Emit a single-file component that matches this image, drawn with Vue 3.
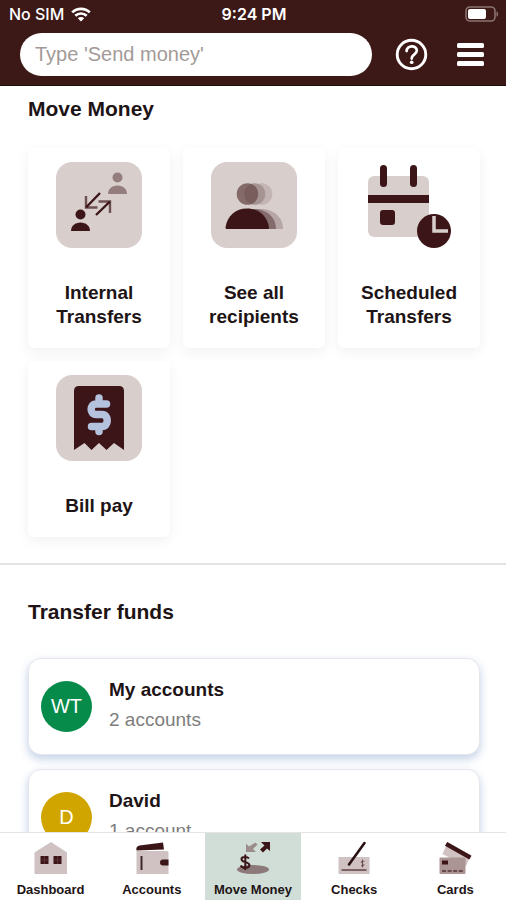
<script setup>
const actions = [
  { id: 'internal', lines: ['Internal', 'Transfers'] },
  { id: 'recipients', lines: ['See all', 'recipients'] },
  { id: 'scheduled', lines: ['Scheduled', 'Transfers'] },
  { id: 'bill', lines: ['Bill pay'] },
]

const payees = [
  { initials: 'WT', name: 'My accounts', detail: '2 accounts', tone: 'green' },
  { initials: 'D', name: 'David', detail: '1 account', tone: 'gold' },
]

const tabs = [
  { id: 'dashboard', label: 'Dashboard' },
  { id: 'accounts', label: 'Accounts' },
  { id: 'move', label: 'Move Money' },
  { id: 'checks', label: 'Checks' },
  { id: 'cards', label: 'Cards' },
]
const activeTab = 'move'
</script>

<template>
  <div class="app">
    <header class="header">
      <div class="status">
        <span class="carrier">
          No SIM
          <svg class="wifi" viewBox="0 0 20 15" aria-hidden="true">
            <g fill="none" stroke="#fff" stroke-width="2.7">
              <path d="M1.2 5.4a12.6 12.6 0 0 1 17.6 0" />
              <path d="M4.3 8.8a8.2 8.2 0 0 1 11.4 0" />
            </g>
            <path d="M10 14.6l-3.2-3.3a4.6 4.6 0 0 1 6.4 0z" fill="#fff" />
          </svg>
        </span>
        <span class="clock">9:24 PM</span>
        <svg class="battery" viewBox="0 0 34 16" aria-hidden="true">
          <rect x="1" y="1" width="29" height="14" rx="4" fill="none" stroke="#8b7472" stroke-width="1.6" />
          <rect x="3" y="3" width="18" height="10" rx="2" fill="#fff" />
          <path d="M31.5 5.2c2.2 1 2.2 4.6 0 5.6z" fill="#8b7472" />
        </svg>
      </div>
      <div class="toolbar">
        <input class="search" type="text" placeholder="Type 'Send money'" aria-label="Search" />
        <button class="icon-button" type="button" aria-label="Help">
          <svg class="help" viewBox="0 0 34 34" fill="none" stroke="#fff">
            <circle cx="17" cy="17" r="14.7" stroke-width="3" />
            <path d="M12 13.5c0-6.5 10.5-6.5 10.5-.5 0 4-5.3 3.800-5.3 8.2" stroke-width="2.8" stroke-linecap="round" />
            <circle cx="17.2" cy="25" r="1.9" fill="#fff" stroke="none" />
          </svg>
        </button>
        <button class="icon-button" type="button" aria-label="Menu">
          <svg class="burger" viewBox="0 0 27 23" fill="#fff">
            <rect y="0" width="27" height="5" rx="1.5" />
            <rect y="9" width="27" height="5" rx="1.5" />
            <rect y="18" width="27" height="5" rx="1.5" />
          </svg>
        </button>
      </div>
    </header>

    <main class="content">
      <section class="move">
        <h1 class="heading">Move Money</h1>
        <div class="grid">
          <button v-for="action in actions" :key="action.id" class="tile" type="button">
            <svg v-if="action.id === 'internal'" class="tile-icon" viewBox="0 0 86 86" aria-hidden="true">
              <rect width="86" height="86" rx="16" fill="#d8cfcd" />
              <g fill="#937d7d">
                <circle cx="61.5" cy="15.5" r="5" />
                <path d="M52 32c0-5 4-8.5 9.5-8.5S71 27 71 32z" />
              </g>
              <g fill="#3c1518">
                <circle cx="24.5" cy="52.5" r="5" />
                <path d="M15 69c0-5 4-8.5 9.5-8.5S34 64 34 69z" />
              </g>
              <g fill="none" stroke-width="2.4">
                <path d="M30 34v11.5H41.500M42.500 39.500H54v11.500" stroke="#6e5050" />
                <path d="M44 31L30 45.500M40 53l14-13.500" stroke="#3c1518" />
              </g>
            </svg>

            <svg v-else-if="action.id === 'recipients'" class="tile-icon" viewBox="0 0 86 86" aria-hidden="true">
              <rect width="86" height="86" rx="16" fill="#d8cfcd" />
              <circle cx="50.500" cy="32" r="10.800" fill="#c3b5b4" />
              <circle cx="43.500" cy="32" r="10.800" fill="#a69493" />
              <circle cx="36.500" cy="32" r="10.800" fill="#846b6a" />
              <path d="M40 22a10.800 10.800 0 0 1 0 20 10.800 10.800 0 0 1 0-20z" fill="#6f5353" opacity=".6" />
              <path d="M28 67c0-12 9.500-20 22-20s22 8 22 20z" fill="#b6a7a6" />
              <path d="M21 67c0-12 9.500-20 22-20s22 8 22 20z" fill="#856c6c" />
              <path d="M14.500 65.500C16 54 24.500 46.500 36 46.500S56.500 54 58 65.500c0 1-.5 1.500-1.500 1.500H16c-1 0-1.500-.5-1.500-1.500z" fill="#3c1518" />
            </svg>

            <svg v-else-if="action.id === 'scheduled'" class="tile-icon" viewBox="0 0 86 86" aria-hidden="true">
              <rect x="2" y="14" width="61" height="61" rx="6" fill="#d8cfcd" />
              <rect x="2" y="33" width="61" height="8" fill="#3c1518" />
              <rect x="14" y="3" width="7" height="22" rx="3.5" fill="#3c1518" />
              <rect x="44" y="3" width="7" height="22" rx="3.5" fill="#3c1518" />
              <rect x="14" y="48" width="15" height="15" rx="3" fill="#3c1518" />
              <circle cx="68" cy="69" r="17" fill="#3c1518" />
              <path d="M68 54v15h14" fill="none" stroke="#d8cfcd" stroke-width="3.5" />
            </svg>

            <svg v-else class="tile-icon" viewBox="0 0 86 86" aria-hidden="true">
              <rect width="86" height="86" rx="16" fill="#d8cfcd" />
              <path d="M18 75V16q0-5 5-5h40q5 0 5 5v59l-10-7-7.500 7-7.500-7-7.500 7-7-7z" fill="#3c1518" />
              <path d="M50.500 29H40c-6.500 0-6.500 10.500 0 10.500h6c7 0 7 12 0 12H35.500M43 23v6M43 51.500v5" fill="none" stroke="#b4c2dd" stroke-width="7.500" stroke-linecap="round" stroke-linejoin="round" />
            </svg>

            <span class="tile-label">
              <span v-for="line in action.lines" :key="line" class="tile-line">{{ line }}</span>
            </span>
          </button>
        </div>
      </section>

      <section class="transfer">
        <h2 class="heading">Transfer funds</h2>
        <div class="payees">
          <button v-for="payee in payees" :key="payee.name" class="payee" type="button">
            <span class="avatar" :class="payee.tone">{{ payee.initials }}</span>
            <span class="payee-text">
              <span class="payee-name">{{ payee.name }}</span>
              <span class="payee-detail">{{ payee.detail }}</span>
            </span>
          </button>
        </div>
      </section>
    </main>

    <nav class="tabs" aria-label="Main">
      <a v-for="tab in tabs" :key="tab.id" class="tab" :class="{ active: tab.id === activeTab }" href="#">
        <svg v-if="tab.id === 'dashboard'" class="tab-icon" viewBox="0 0 36 34" aria-hidden="true">
          <path d="M1.5 33V11.500L18 1l16 10.500V33z" fill="#d0c2c2" />
          <path d="M7.500 15h8v8h-8zM20.500 15h8v8h-8z" fill="#3c1518" />
          <path d="M11.500 15v8M7.500 19h8M24.500 15v8M20.500 19h8" stroke="#64393b" stroke-width=".8" />
        </svg>

        <svg v-else-if="tab.id === 'accounts'" class="tab-icon" viewBox="0 0 36 34" aria-hidden="true">
          <path d="M3 10h30q1.500 0 1.500 1.500V33H2.500V10z" fill="#d0c2c2" />
          <path d="M2.500 9.500q-1-4 3-5L29 1.500l1 7z" fill="#3c1518" />
          <path d="M7.500 15v14" stroke="#3c2a2a" stroke-width="2" />
          <path d="M34.500 18.500H29a3 3 0 0 0 0 6h5.500z" fill="#3c1518" />
        </svg>

        <svg v-else-if="tab.id === 'move'" class="tab-icon" viewBox="0 0 36 34" aria-hidden="true">
          <ellipse cx="18" cy="28.500" rx="16" ry="4.500" fill="#8c7a7a" />
          <path d="M20.500 1.500l2 2-4.500 4.500 3 3H11V2.500l3 3z" fill="#9b8d8c" />
          <path d="M35 1v9l-3-2.500-4 4L25 8.500l4.500-4L26 1z" fill="#3c1518" />
          <path d="M14 17.500c-1.500-2-7.500-2.300-7.500.7 0 3.600 8 2.300 8 6 0 3.300-7.500 3.300-8.800.3M10.300 13.500v15.500" fill="none" stroke="#3c1518" stroke-width="2" />
        </svg>

        <svg v-else-if="tab.id === 'checks'" class="tab-icon" viewBox="0 0 36 34" aria-hidden="true">
          <rect x="2.500" y="16" width="31" height="17" fill="#d0c2c2" />
          <path d="M5.500 29h25" stroke="#7c6262" stroke-width="2" />
          <path d="M28.500 20.500c-3-1.500-4.500 1-2 2s1.500 3.500-1.500 2M26.500 18.500v8" fill="none" stroke="#6e5050" stroke-width="1" />
          <path d="M13 23.500L28.500 2" stroke="#2a1213" stroke-width="2.6" stroke-linecap="round" />
        </svg>

        <svg v-else class="tab-icon" viewBox="0 0 36 34" aria-hidden="true">
          <path d="M10.500 1.500L34 14l-5 11L5.500 13z" fill="#d0c2c2" />
          <path d="M11 4L31.500 15.500" stroke="#3c1518" stroke-width="4.400" stroke-linecap="square" />
          <rect x="2.500" y="16.500" width="26" height="16.500" rx="1" fill="#ab9594" />
          <rect x="5" y="19.500" width="6" height="4" fill="#3c1518" />
          <path d="M5 30h21" stroke="#684a4a" stroke-width="1.800" stroke-dasharray="4 1.600" />
        </svg>
        <span class="tab-label">{{ tab.label }}</span>
      </a>
    </nav>
  </div>
</template>

<style>
body {
  margin: 0;
  background: #fff;
}
</style>

<style scoped>
* {
  box-sizing: border-box;
}

.app {
  display: flex;
  flex-direction: column;
  height: 100vh;
  overflow: hidden;
  color: #1e1416;
  font-family: "Liberation Sans", Arial, sans-serif;
}

button {
  margin: 0;
  border: 0;
  color: inherit;
  font: inherit;
  cursor: pointer;
}

svg {
  display: block;
  flex: none;
}

.header {
  flex: none;
  background: #3c1817;
  border-bottom: 1px solid #1f0c0c;
}

.status {
  display: grid;
  grid-template-columns: 1fr auto 1fr;
  align-items: center;
  height: 28px;
  padding: 0 7px 0 9px;
  color: #fff;
  font: 500 16px/20px Inter, "Liberation Sans", sans-serif;
}

.carrier {
  display: flex;
  align-items: center;
  gap: 7px;
}

.wifi {
  width: 20px;
  height: 15px;
}

.clock {
  font-weight: 600;
}

.battery {
  width: 34px;
  height: 16px;
  justify-self: end;
}

.toolbar {
  display: flex;
  align-items: center;
  padding: 5px 22px 9px 20px;
}

.search {
  flex: 1;
  min-width: 0;
  height: 43px;
  margin-right: 23px;
  padding: 0 15px;
  border: 0;
  border-radius: 22px;
  background: #fff;
  color: #1e1416;
  font: 20px/24px "Liberation Sans", Arial, sans-serif;
}

.search::placeholder {
  color: #a39a98;
  opacity: 1;
}

.icon-button {
  padding: 0;
  background: none;
}

.icon-button + .icon-button {
  margin-left: 29px;
}

.help {
  width: 33px;
  height: 33px;
}

.burger {
  width: 27px;
  height: 23px;
}

.content {
  flex: 1;
  min-height: 0;
  overflow: hidden;
}

.heading {
  margin: 0;
  font-size: 21px;
  line-height: 24px;
  font-weight: 700;
}

.move {
  padding: 11px 26px 26px 28px;
  border-bottom: 2px solid #e3e3e3;
}

.grid {
  display: grid;
  grid-template-columns: repeat(3, 1fr);
  gap: 13px;
  margin-top: 27px;
}

.tile {
  display: flex;
  flex-direction: column;
  align-items: center;
  gap: 33px;
  padding: 14px 0 19px;
  border-radius: 6px;
  background: #fff;
  box-shadow: 0 4px 14px rgba(0, 0, 0, 0.06);
}

.tile-icon {
  width: 86px;
  height: 86px;
}

.tile-label {
  font-size: 19px;
  line-height: 24px;
  font-weight: 700;
}

.tile-line {
  display: block;
}

.transfer {
  padding: 35px 26px 0 28px;
}

.payees {
  display: flex;
  flex-direction: column;
  gap: 14px;
  margin-top: 34px;
}

.payee {
  display: flex;
  align-items: center;
  gap: 17px;
  height: 97px;
  padding: 0 12px;
  border: 1px solid #e6e7ea;
  border-radius: 13px;
  background: #fff;
  box-shadow: 0 4px 10px rgba(120, 150, 200, 0.45);
  text-align: left;
}

.avatar {
  display: grid;
  place-items: center;
  width: 51px;
  height: 51px;
  border-radius: 50%;
  color: #fff;
  font-size: 20px;
}

.green {
  background: #078b4b;
}

.gold {
  background: #d0a500;
}

.payee-text {
  display: flex;
  flex-direction: column;
  gap: 6px;
  padding-bottom: 4px;
  line-height: 24px;
}

.payee-name {
  font-size: 19px;
  font-weight: 700;
}

.payee-detail {
  color: #7d7d7d;
  font-size: 19px;
}

.tabs {
  position: relative;
  display: grid;
  grid-template-columns: repeat(5, 1fr);
  flex: none;
  border-top: 1px solid #e4e4e4;
  background: #fff;
}

.tab {
  display: flex;
  flex-direction: column;
  align-items: center;
  gap: 7px;
  margin: 0 3px;
  padding: 8px 0 2px;
  color: #1e1416;
  text-decoration: none;
}

.active {
  background: #d0ded7;
}

.tab-icon {
  width: 36px;
  height: 34px;
}

.tab-label {
  font-size: 13px;
  line-height: 16px;
  font-weight: 700;
  white-space: nowrap;
}
</style>
